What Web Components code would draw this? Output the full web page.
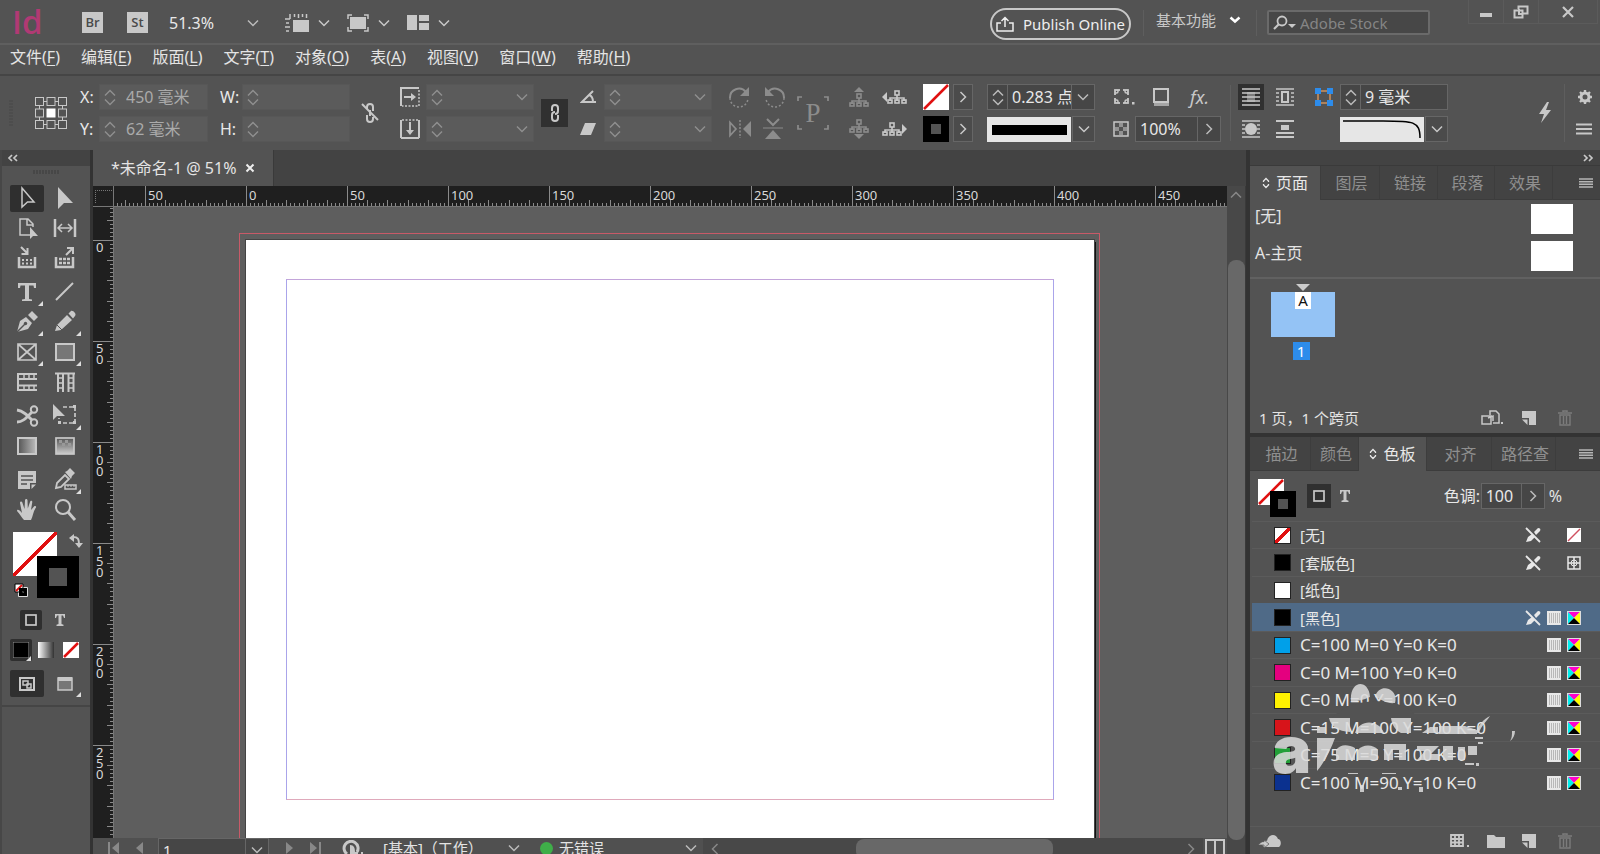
<!DOCTYPE html>
<html lang="zh-CN">
<head>
<meta charset="utf-8">
<title>未命名-1</title>
<style>
  html, body { margin: 0; height: 100%; }
  body {
    font: 16px/20px "Noto Sans", "Noto Sans CJK SC", sans-serif;
    color: #e4e4e4; background: #535353; overflow: hidden;
    --bg: #535353; --dark: #434343; --edge: #333; --field: #464646; --line: #666; --ink: #c8c8c8;
  }
</style>
</head>
<body>
<design-app></design-app>
<script>
const grid3 = (() => {
  let s = '';
  for (let r = 0; r < 3; r++) for (let c = 0; c < 3; c++)
    s += `<rect x="${1.5 + c * 11.5}" y="${1.5 + r * 11.5}" width="8" height="8" ${r === 1 && c === 1 ? 'fill="#fff" stroke="#fff"' : ''}/>`;
  return s + '<path d="M10 5.5h3M21 5.5h3M10 28.5h3M21 28.5h3M5.5 10v3M5.5 21v3M28.5 10v3M28.5 21v3"/>';
})();
const tree = '<rect x="8" y="7" width="4" height="4"/><path d="M10 11v3M3 17v-3h14v3M10 14v3"/><rect x="1" y="16" width="4" height="3"/><rect x="8" y="16" width="4" height="3"/><rect x="15" y="16" width="4" height="3"/>';
const lines = 'stroke="currentColor" stroke-width="2" fill="none"';
/* name: [width, height, markup]; shapes inherit fill from currentColor */
const ICONS = {
  chev: [12, 8, `<path d="M1 1.500l5 5 5-5" fill="none" stroke="currentColor" stroke-width="1.500"/>`],
  chevBold: [12, 8, `<path d="M1.500 1.500l4.500 4 4.500-4" fill="none" stroke="currentColor" stroke-width="2.500"/>`],
  right: [8, 12, `<path d="M1.500 1l5 5-5 5" fill="none" stroke="currentColor" stroke-width="1.500"/>`],
  left: [8, 12, `<path d="M6.500 1l-5 5 5 5" fill="none" stroke="currentColor" stroke-width="1.500"/>`],
  up: [12, 8, `<path d="M1 6.500l5-5 5 5" fill="none" stroke="currentColor" stroke-width="1.500"/>`],
  dblLeft: [12, 8, `<path d="M5 1L2 4l3 3M10 1L7 4l3 3" fill="none" stroke="currentColor" stroke-width="1.700"/>`],
  dblRight: [12, 8, `<path d="M2 1l3 3-3 3M7 1l3 3-3 3" fill="none" stroke="currentColor" stroke-width="1.700"/>`],
  diamond: [8, 12, `<path d="M1.500 5V4L4 1.500 6.500 4v1M1.500 7v1L4 10.500 6.500 8V7" fill="none" stroke="currentColor" stroke-width="1.300"/>`],
  menu: [14, 10, `<path d="M0 1h14M0 3.700h14M0 6.300h14M0 9h14" stroke="currentColor" stroke-width="1.400"/>`],
  menu3: [16, 12, `<path d="M0 1.500h16M0 6h16M0 10.500h16" stroke="currentColor" stroke-width="2"/>`],
  rulers: [24, 20, `<rect x="8" y="7" width="16" height="12"/><path d="M5 5V1M9.500 4V1M13.500 5V1M17.500 4V1M21.500 5V1M0 6h5M1 10h3M0 14h5M1 18h3M5 1v5" stroke="currentColor" stroke-width="1.500"/>`],
  screen: [22, 18, `<rect x="3" y="3" width="16" height="12"/><path d="M1 5V1h4M17 1h4v4M21 13v4h-4M5 17H1v-4" fill="none" stroke="currentColor" stroke-width="1.500"/>`],
  arrange: [22, 15, `<path d="M0 0h10v15H0zM12 0h10v6H12zM12 8h10v7H12z"/>`],
  share: [18, 16, `<path d="M5 7H1v8h16V7h-4M9 11V2M5.500 5L9 1.500 12.500 5" fill="none" stroke="currentColor" stroke-width="1.500"/>`],
  search: [24, 16, `<circle cx="9" cy="6" r="4.500" fill="none" stroke="currentColor" stroke-width="1.800"/><path d="M5.500 9.500L1 14" stroke="currentColor" stroke-width="2.200"/><path d="M15 9h8l-4 4z"/>`],
  min: [14, 12, `<rect x="1" y="7" width="12" height="4"/>`],
  restore: [16, 14, `<path d="M5.500 4V1.500h9v7H10M1.500 5.500h8v7h-8zM6 4v5h4" fill="none" stroke="currentColor" stroke-width="2"/>`],
  close: [12, 12, `<path d="M1 1l10 10M11 1L1 11" stroke="currentColor" stroke-width="2.200"/>`],
  tabClose: [10, 10, `<path d="M1.500 1.500l7 7M8.500 1.500l-7 7" stroke="currentColor" stroke-width="2"/>`],
  ref: [34, 34, `<g fill="none" stroke="currentColor" stroke-width="1">${grid3}</g>`],
  unlink: [20, 22, `<path d="M7 7V5a3 3 0 0 1 6 0v4M7 13v4a3 3 0 0 0 6 0v-2M10 8v6" ${lines}/><path d="M2 2l16 16" ${lines}/>`],
  link: [12, 20, `<path d="M3 8V5a3 3 0 0 1 6 0v3a3 3 0 0 1-3 3M9 12v3a3 3 0 0 1-6 0v-3a3 3 0 0 1 3-3" ${lines}/>`],
  scaleX: [20, 20, `<path d="M1 19V1h18" fill="none" stroke="currentColor" stroke-width="2"/><path d="M19 3v16H2" fill="none" stroke="currentColor" stroke-width="1.500" stroke-dasharray="2 1.500"/><path d="M4 9h7V6l5 4-5 4v-3H4z"/>`],
  scaleY: [20, 20, `<path d="M1 1v18M19 1v18M1 19h18" fill="none" stroke="currentColor" stroke-width="2"/><path d="M2 1h16" stroke="currentColor" stroke-width="1.500" stroke-dasharray="2 1.500"/><path d="M9 3h2v8h3l-4 5-4-5h3z"/>`],
  angle: [18, 14, `<path d="M13 1L2 12h14" fill="none" stroke="currentColor" stroke-width="2"/><path d="M9 5c3 1 4 4 4 7" fill="none" stroke="currentColor" stroke-width="2"/>`],
  shear: [16, 12, `<path d="M5 0h11l-5 12H0z"/>`],
  rotCW: [24, 22, `<path d="M2 12A9 9 0 0 1 18 6" ${lines}/><path d="M21 1v9h-9z"/><path d="M2 12a9 9 0 0 0 18 0" fill="none" stroke="currentColor" stroke-width="1.500" stroke-dasharray="2 2"/>`],
  rotCCW: [24, 22, `<path d="M22 12A9 9 0 0 0 6 6" ${lines}/><path d="M3 1v9h9z"/><path d="M22 12a9 9 0 0 1-18 0" fill="none" stroke="currentColor" stroke-width="1.500" stroke-dasharray="2 2"/>`],
  flipH: [24, 18, `<path d="M2 2.500v13L8 9z" fill="none" stroke="currentColor" stroke-width="1.700"/><path d="M23 1v16l-8-8z"/><path d="M12 0v18" stroke="currentColor" stroke-width="1.500" stroke-dasharray="2 1.500"/>`],
  flipV: [22, 22, `<path d="M5 1l6 6 6-6" fill="none" stroke="currentColor" stroke-width="2"/><path d="M1 10h20" stroke="currentColor"/><path d="M11 12l8 9H3z"/>`],
  corners: [32, 34, `<path d="M1 5V1h4M27 1h4v4M31 29v4h-4M5 33H1v-4" fill="none" stroke="currentColor" stroke-width="1.700"/>`],
  treeUp: [20, 20, `<g fill="none" stroke="currentColor" stroke-width="1.600">${tree}</g><path d="M10 0l5 5H5z"/>`],
  treeDown: [20, 20, `<g transform="translate(0 -6)" fill="none" stroke="currentColor" stroke-width="1.600">${tree}</g><path d="M10 20l5-5H5z"/>`],
  treePrev: [26, 18, `<g transform="translate(5 -4)" fill="none" stroke="currentColor" stroke-width="1.600">${tree}</g><path d="M0 9l5-5v10z"/>`],
  treeNext: [26, 18, `<g transform="translate(0 -4)" fill="none" stroke="currentColor" stroke-width="1.600">${tree}</g><path d="M25 9l-5-5v10z"/>`],
  none: [26, 26, `<path d="M0 0h26v26H0z" fill="#fff"/><path d="M1 25L25 1" stroke="#e01010" stroke-width="2.500"/>`],
  stroke: [26, 26, `<path d="M0 0h26v26H0z" fill="#000"/><path d="M8 8h10v10H8z" fill="#535353"/>`],
  opts: [22, 18, `<rect x="2" y="2" width="13" height="13" fill="none" stroke="currentColor" stroke-width="1.800"/><path d="M7 0h3v4H7zM7 13h3v4H7zM0 7h4v3H0zM13 7h4v3h-4z" fill="#535353"/><path d="M5 2v1.500A1.500 1.500 0 0 1 3.500 5H2M12 2v1.500A1.500 1.500 0 0 0 13.500 5H15M5 15v-1.500A1.500 1.500 0 0 0 3.500 12H2M12 15v-1.500a1.500 1.500 0 0 1 1.500-1.500H15" fill="none" stroke="currentColor" stroke-width="1.500"/><rect x="19" y="14" width="2.500" height="2.500"/>`],
  shadow: [20, 20, `<rect x="2" y="2" width="14" height="13" fill="#535353" stroke="currentColor" stroke-width="2"/><path d="M2 17.500h15" stroke="currentColor" stroke-width="3" opacity=".7"/>`],
  checker: [16, 16, `<rect x="1" y="1" width="14" height="14" fill="none" stroke="currentColor" stroke-width="1.500"/><path d="M6 2h4v4H6zM2 6h4v4H2zM10 6h4v4h-4zM6 10h4v4H6z" opacity=".55"/>`],
  wrap1: [20, 20, `<path d="M1 2h18M1 6h18M1 10h18M1 14h18M1 18h18" stroke="currentColor" stroke-width="1.600"/><path d="M6 5h8v10H6z" opacity=".5"/>`],
  wrap2: [20, 18, `<path d="M1 1h18M1 5h3M1 9h3M1 13h3M16 5h3M16 9h3M16 13h3M1 17h18" stroke="currentColor" stroke-width="1.600"/><rect x="7" y="4" width="6" height="10" fill="none" stroke="currentColor" stroke-width="2"/>`],
  wrap3: [20, 18, `<path d="M1 1h18M1 5h3M1 9h3M1 13h3M16 5h3M16 9h3M16 13h3M1 17h18" stroke="currentColor" stroke-width="1.600"/><circle cx="10" cy="9" r="6"/>`],
  wrap4: [20, 18, `<path d="M1 1h18M1 13h18M1 17h18" stroke="currentColor" stroke-width="1.800"/><path d="M6 5h8v5H6z"/>`],
  cornerOpt: [20, 20, `<rect x="4" y="4" width="12" height="12" fill="none" stroke="#b0825a" stroke-width="2"/><path d="M1 1h6v6H1zM13 1h6v6h-6zM1 13h6v6H1zM13 13h6v6h-6z" fill="#2d8ceb"/>`],
  bolt: [14, 22, `<path d="M9 0L1 12h5l-3 9L13 8H8l3-8z"/>`],
  gear: [14, 14, `<circle cx="7" cy="7" r="4" fill="none" stroke="currentColor" stroke-width="3"/><path d="M7 0v2M7 12v2M0 7h2M12 7h2M2 2l1.500 1.500M10.500 10.500L12 12M12 2l-1.500 1.500M3.500 10.500L2 12" stroke="currentColor" stroke-width="2.400"/>`],
  curve: [84, 25, `<path d="M0 0h84v25H0z" fill="#e6e6e6"/><path d="M3 4h40c30 0 37 0 37 17" fill="none" stroke="#000" stroke-width="1.500"/>`],
  solid: [84, 25, `<path d="M0 0h84v25H0z" fill="#e6e6e6"/><path d="M5 8h75v10H5z" fill="#000"/>`],
  tSelect: [24, 24, `<path d="M7 2v19l5.500-5H19z" fill="none" stroke="currentColor" stroke-width="1.500"/>`],
  tDirect: [24, 24, `<path d="M5 1v22l6-6h9z"/>`],
  tPage: [24, 24, `<path d="M15 19H5V3h8l5 5v3M12 3v6h6" fill="none" stroke="currentColor" stroke-width="1.500"/><path d="M15 11v12l3-3h5z"/>`],
  tGap: [24, 24, `<path d="M2 3v18M22 3v18" stroke="currentColor" stroke-width="2.500"/><path d="M5 12h14M9 8l-4 4 4 4M15 8l4 4-4 4" fill="none" stroke="currentColor" stroke-width="1.500"/>`],
  tCollect: [24, 24, `<path d="M4 11v10h16V11" fill="none" stroke="currentColor" stroke-width="2.500"/><path d="M6 1l6 6M12.500 2v6H6.500" ${lines}/><path d="M7 17.500h10M7 14h10" stroke="currentColor" stroke-width="2" stroke-dasharray="2 2"/>`],
  tPlace: [24, 24, `<path d="M3 11v10h17V11" fill="none" stroke="currentColor" stroke-width="2.500"/><path d="M13 9l6-6M14 2h6v6" ${lines}/><path d="M6 13h11M6 17h11" stroke="currentColor" stroke-width="2.500" stroke-dasharray="3 1"/>`],
  tType: [24, 24, `<path d="M3 3h18v5h-2l-.5-2.500H14V19l3 .5V21H7v-1.500l3-.5V5.500H5.500L5 8H3z"/>`],
  tLine: [24, 24, `<path d="M3 20L20 3" ${lines}/>`],
  tPen: [24, 24, `<path d="M2 22L5 11l6-4 6 6-4 6zM13 5l4-4 6 6-4 4z"/><path d="M2 22l8-8" stroke="#535353" stroke-width="1.500"/><circle cx="10.500" cy="13.500" r="1.700" fill="#535353"/>`],
  tPencil: [24, 24, `<path d="M2 21l2-6L14 5l5 5L8 20zM15.500 3.500L18 1c2-1 6 3 4 5l-2 2.500z"/><path d="M4 15l5 5" stroke="#535353"/>`],
  tFrame: [24, 24, `<path d="M3 4h18v16H3zM3 4l18 16M21 4L3 20" fill="none" stroke="currentColor" stroke-width="1.700"/>`],
  tRect: [24, 24, `<rect x="3" y="4" width="18" height="16" fill="#777" stroke="currentColor" stroke-width="2"/>`],
  tRows: [24, 24, `<path d="M3 3v18M2 4h20M2 9h20M2 15.500h20M2 20h20" ${lines}/><path d="M9 4v5M14 4v5M19 4v5M9 15v5M14 15v5M19 15v5" stroke="currentColor" stroke-width="1.500"/>`],
  tCols: [24, 24, `<path d="M2 3.500h20M5 3v19M10 3v19M15.500 3v19M20.500 3v19" ${lines}/><path d="M5 8h5M5 13h5M5 18h5M15 8h5M15 13h5M15 18h5" stroke="currentColor" stroke-width="1.500"/>`],
  tScissors: [24, 24, `<circle cx="19" cy="5.500" r="3.200" ${lines}/><circle cx="19" cy="18.500" r="3.200" ${lines}/><path d="M2 6c6 1 10 5 15 10M2 18c6 0 9-4 15-10" fill="none" stroke="currentColor" stroke-width="2.800"/>`],
  tTransform: [24, 24, `<path d="M0 0v16l4-4h8z"/><path d="M10 3h12v16H6v-5" fill="none" stroke="currentColor" stroke-width="1.700" stroke-dasharray="4 2"/><path d="M20 1h3v3h-3zM20 17h3v3h-3zM5 17h3v3H5z"/>`],
  tGrad: [24, 24, `<linearGradient id="a"><stop stop-color="#555"/><stop offset="1" stop-color="#bbb"/></linearGradient><rect x="3" y="4" width="18" height="16" fill="url(#a)" stroke="currentColor" stroke-width="2"/>`],
  tFeather: [24, 24, `<linearGradient id="b" x2="0" y2="1"><stop stop-color="#555"/><stop offset="1" stop-color="#ccc"/></linearGradient><rect x="3" y="4" width="18" height="16" fill="url(#b)" stroke="currentColor" stroke-width="1.700"/><path d="M6 6h3v3H6zM12 6h3v3h-3zM9 9h3v3H9zM15 9h3v3h-3z" fill="#999"/>`],
  tNote: [24, 24, `<path d="M3 3h18v12h-6v6H3z"/><path d="M21 16.500L16.500 21v-4.500z"/><path d="M6 8h12M6 12h12M6 16h6" stroke="#535353" stroke-width="1.500"/>`],
  tDropper: [24, 24, `<path d="M3 20l1-5 8-8 4 4-8 8z" fill="none" stroke="currentColor" stroke-width="1.800"/><path d="M12 4l2-1 3-3 5 5-3 3-1 3z"/><path d="M12 17h11v4H12z" fill="none" stroke="currentColor" stroke-width="1.500"/><path d="M15 17v2M18 17v2M21 17v2" stroke="currentColor"/>`],
  tHand: [24, 24, `<path d="M9 22c-2-2-4-6-7-9 0-2 2-2 5 2L5 5c0-2 2-2 2.500 0L9.500 11 10 2.500c0-2 2.500-2 2.500 0l.3 8L15 4c.5-2 2.500-1.500 2.300 0L16 12l3-3.500c1.500-1 2.500 0 2 1-3 4-3 9-5 12.500z"/>`],
  tZoom: [24, 24, `<circle cx="10" cy="9" r="7" ${lines}/><path d="M15 14l7 8" stroke="currentColor" stroke-width="3"/>`],
  swap: [14, 14, `<path d="M4 3c5 0 6 2 6 7" ${lines}/><path d="M0 4l5-4v8zM10 14l-4-5h8z"/>`],
  defaults: [14, 14, `<path d="M1 1h8v8H1z" fill="#fff" stroke="#000"/><path d="M2 8l6-6" stroke="#e01010" stroke-width="2"/><path d="M6.500 6.500h5v5h-5z" fill="none" stroke="#000" stroke-width="3"/><path d="M4.500 9.500v4h9v-9h-4" fill="none" stroke="#ddd"/>`],
  box: [12, 12, `<rect x="1" y="1" width="10" height="10" fill="none" stroke="currentColor" stroke-width="1.700"/>`],
  tee: [12, 12, `<path d="M1 0h10v4h-1L9 1.500H7.500V10l2 .7V12h-7v-1.300l2-.7V1.500H3L2 4H1z"/>`],
  black: [16, 16, `<path d="M0 0h16v16H0z" fill="#000" stroke="#999"/>`],
  gradient: [16, 16, `<linearGradient id="c"><stop stop-color="#fff"/><stop offset="1" stop-color="#333"/></linearGradient><rect width="16" height="16" fill="url(#c)"/>`],
  noneSm: [16, 16, `<path d="M0 0h16v16H0z" fill="#fff"/><path d="M1 15L15 1" stroke="#e01010" stroke-width="2.500"/>`],
  viewN: [16, 16, `<rect x="1" y="2" width="14" height="12" fill="none" stroke="currentColor" stroke-width="2"/><path d="M4 5h5v4H4zM8 8h4v4H8z" fill="none" stroke="currentColor" stroke-width="1.500"/>`],
  viewP: [16, 16, `<rect x="1" y="2" width="14" height="12" fill="#777" stroke="currentColor" stroke-width="1.500"/><path d="M1 1h14v4H1z"/>`],
  first: [12, 12, `<path d="M0 0h2v12H0zM11 0v12L4 6z"/>`],
  prev: [8, 12, `<path d="M7 0v12L0 6z"/>`],
  next: [8, 12, `<path d="M0 0v12l7-6z"/>`],
  last: [12, 12, `<path d="M9 0h2v12H9zM0 0v12l7-6z"/>`],
  preflight: [22, 16, `<path d="M5 14A7 7 0 1 1 15 12" fill="none" stroke="currentColor" stroke-width="3"/><path d="M8 5c4 0 5 3 5 7h3v4H8z"/><path d="M19 12h2v2h-2z"/>`],
  split: [20, 16, `<path d="M1 20V1h18v19M10 1v18" ${lines}/>`],
  pageSize: [24, 16, `<path d="M9 5V1h6l3 3v9h-6M1 6h9v8H1zM7 8l5-2v5" fill="none" stroke="currentColor" stroke-width="1.500"/><path d="M20 12h2v2h-2z"/>`],
  newPage: [14, 14, `<path d="M0 0h14v14H7V7H0z"/><path d="M0 8.500h5.500V14z"/>`],
  trash: [14, 16, `<path d="M0 3h14M5 2V1h4v1" fill="none" stroke="currentColor" stroke-width="1.500"/><path d="M2 5h10v10H2zM5.500 6v8M8.500 6v8" fill="none" stroke="currentColor" stroke-width="1.400"/>`],
  cloud: [24, 14, `<path d="M7 13c-2 0-3-2-2-3 0-3 3-4 4-3 1-7 9-8 11-2 3 0 4 6 1 8z"/><path d="M0 11c3-3 5-4 6-3V6l5 4-5 4v-3z" stroke="#535353" stroke-width=".7"/>`],
  swGrid: [20, 14, `<path d="M1 1h12v11H1zM1 5h12M1 8.500h12M5 1v11M9 1v11" fill="none" stroke="currentColor" stroke-width="1.800"/><path d="M17 11h2v2h-2z"/>`],
  folder: [18, 14, `<path d="M0 1h7l2 2h9v11H0z"/>`],
  noEdit: [16, 16, `<path d="M1 1l14 14" stroke="currentColor" stroke-width="1.800"/><path d="M1 15l2-5 4-3 3 3-4 4zM9 5l4-4c2 0 3 1 2 3l-4 4z"/>`],
  noneBox: [14, 14, `<path d="M0 0h14v14H0z" fill="#fff"/><path d="M1 13L13 1" stroke="#d05060" stroke-width="1.500"/>`],
  regist: [14, 14, `<path d="M1 1h12v12H1zM7 1v12M1 7h12" fill="none" stroke="currentColor" stroke-width="1.500"/><circle cx="7" cy="7" r="3" fill="none" stroke="currentColor"/>`],
  process: [14, 14, `<path d="M0 0h14v14H0z"/><path d="M2 3h11M2 5h11M2 7h11M2 9h11M2 11h11" stroke="#888" stroke-dasharray="1 1"/>`],
  cmyk: [14, 14, `<path d="M0 0h14v14H0z" fill="#ddd"/><path d="M1 1h12L7 7z" fill="#f0c"/><path d="M1 1v12l6-6z" fill="#0ee"/><path d="M13 1v12L7 7z" fill="#ff0"/><path d="M1 13h12L7 7z" fill="#000"/>`],
  grip: [26, 6, `<path d="M1 1v4M4 1v4M7 1v4M10 1v4M13 1v4M16 1v4M19 1v4M22 1v4M25 1v4" stroke="#3c3c3c"/>`],
  vgrip: [6, 26, `<path d="M1 1h4M1 4h4M1 7h4M1 10h4M1 13h4M1 16h4M1 19h4M1 22h4M1 25h4" stroke="#484848"/>`]
};

/* Registers an element whose shadow root is cloned from a template; html may read attributes. */
function define(tag, css, html, setup) {
  const sheet = `<style>*{box-sizing:border-box}:host{display:block;box-sizing:border-box}
    button{font:inherit;color:inherit;background:none;border:0;padding:0;margin:0;display:flex;align-items:center;justify-content:center}
    input,select{font:inherit;color:inherit;background:none;border:0;padding:0;margin:0;min-width:0;outline:0;appearance:none}
    ${css}</style>`;
  customElements.define(tag, class extends HTMLElement {
    connectedCallback() {
      if (this.shadowRoot) return;
      const t = document.createElement('template');
      t.innerHTML = sheet + (typeof html === 'function' ? html(n => this.getAttribute(n) || '', this) : html);
      this.attachShadow({ mode: 'open' }).append(t.content.cloneNode(true));
      if (setup) setup(this.shadowRoot, this);
    }
  });
}
const icon = (n, cls = '') => `<ui-icon name="${n}" class="${cls}"></ui-icon>`;

define('ui-icon', ':host{display:inline-flex;flex:none}svg{display:block;fill:currentColor}', a => {
  const [w, h, m] = ICONS[a('name')];
  return `<svg width="${w}" height="${h}" viewBox="0 0 ${w} ${h}" aria-hidden="true">${m}</svg>`;
});

define('num-field', `
  :host{display:flex;align-items:center;height:26px}
  label{flex:none;width:var(--label,0);color:#e8e8e8}
  .f{flex:1;min-width:0;height:100%;display:flex;background:var(--field);border:1px solid var(--line)}
  .spin{flex:none;width:20px;display:flex;flex-direction:column;justify-content:space-between;align-items:center;padding:4px 0;border-right:1px solid var(--line);color:#bbb}
  .spin button{height:7px}
  input{flex:1;width:0;padding-left:4px;color:#e8e8e8}
  .arrow{flex:none;width:23px;border-left:1px solid var(--line);color:#bbb}
  :host([dim]) .f{background:#5b5b5b;border-color:#575757}
  :host([dim]) .spin,:host([dim]) .arrow{border-color:transparent;color:#8f8f8f}
  :host([dim]) input{color:#aaa;padding-left:6px}`,
  a => `${a('label') ? `<label for="i">${a('label')}</label>` : ''}<div class="f">
    ${a('spin') ? `<div class="spin"><button aria-label="增加">${icon('up')}</button><button aria-label="减少">${icon('chev')}</button></div>` : ''}
    <input id="i" value="${a('value')}" aria-label="${a('label') || a('hint')}">
    ${a('arrow') ? `<button class="arrow" aria-label="选项">${icon(a('arrow'))}</button>` : ''}</div>`);

define('drop-down', `
  :host{display:grid;align-items:center}
  select,ui-icon{grid-area:1/1}
  select{width:100%}
  ui-icon{justify-self:end;pointer-events:none;color:var(--arrow,#bbb)}`,
  a => `<select aria-label="${a('hint')}"><option>${a('value')}</option></select>${icon(a('icon') || 'chev')}`);

define('title-bar', `
  :host{display:flex;align-items:center;height:45px;border-bottom:2px solid #5f5f5f;padding:2px 0 0 12px;color:var(--ink)}
  .logo{width:70px;font:600 33px/41px "Open Sans",sans-serif;color:#b03a74;height:43px}
  .badge{width:21px;height:21px;background:var(--ink);color:#4a4a4a;font:600 13px/21px "Open Sans",sans-serif;margin-right:24px}
  .zoom{width:90px;margin:0 26px 0 -3px;color:#e8e8e8}
  .menu{gap:9px;margin-right:17px}
  .menu ui-icon{color:#c8c8c8}
  .publish{height:32px;width:141px;border:2px solid var(--ink);border-radius:16px;margin-left:auto;gap:9px;font-size:15px;color:#eee;margin-top:2px}
  .sep{width:1px;height:26px;background:#5e5e5e;margin:0 10px 0 15px}
  .sep1{margin:0 12px}
  .ws{width:85px;font-size:15px;margin-top:-6px}
  .find{display:flex;align-items:center;height:25px;width:163px;border:2px solid #6a6a6a;border-radius:2px;background:#474747;padding-left:4px}
  .find input{flex:1;width:0;font-size:15px;padding-left:3px}
  .find input::placeholder{color:#858585;opacity:1}
  .win{display:flex;align-self:flex-start;height:24px;margin:-2px 2px 0 38px;border:1px solid #5b5b5b;border-top:0}
  .win button{width:35px;border-right:1px solid #5b5b5b}
  .win button:last-child{width:58px;border:0}`,
  `<div class="logo">Id</div>
   <button class="badge">Br</button><button class="badge">St</button>
   <drop-down class="zoom" value="51.3%" hint="缩放级别"></drop-down>
   <button class="menu" aria-label="视图选项">${icon('rulers')}${icon('chev')}</button>
   <button class="menu" aria-label="屏幕模式">${icon('screen')}${icon('chev')}</button>
   <button class="menu" aria-label="排列文档">${icon('arrange')}${icon('chev')}</button>
   <button class="publish">${icon('share')}Publish Online</button>
   <div class="sep sep1"></div>
   <drop-down class="ws" value="基本功能" hint="工作区" icon="chevBold" style="--arrow:#fff"></drop-down>
   <div class="sep"></div>
   <label class="find">${icon('search')}<input placeholder="Adobe Stock" aria-label="Adobe Stock"></label>
   <div class="win"><button aria-label="最小化">${icon('min')}</button><button aria-label="还原">${icon('restore')}</button><button aria-label="关闭">${icon('close')}</button></div>`);

define('menu-bar', `
  :host{display:flex;gap:21px;height:31px;padding:0 10px;border-bottom:2px solid #454545}
  button{height:24px;line-height:24px}
  u{text-underline-offset:2px}`,
  [['文件', 'F'], ['编辑', 'E'], ['版面', 'L'], ['文字', 'T'], ['对象', 'O'], ['表', 'A'], ['视图', 'V'], ['窗口', 'W'], ['帮助', 'H']]
    .map(([t, k]) => `<button>${t}(<u>${k}</u>)</button>`).join(''));

define('control-bar', `
  :host{display:flex;align-items:center;height:74px;padding:0 8px;color:var(--ink)}
  .g{flex:none;display:grid;grid-template-rows:26px 26px;row-gap:6px;align-items:center;justify-items:start}
  .g num-field,.g .wide{width:100%}
  .xy{grid-template-columns:128px;margin-left:12px}
  .wh{grid-template-columns:130px;margin-left:12px;--label:22px}
  .xy{--label:19px}
  .un{margin-left:10px}
  .sc{grid-template-columns:22px 108px;column-gap:4px;margin-left:20px}
  .lk{width:27px;height:28px;background:#303030;margin-left:7px}
  .sh{grid-template-columns:20px 108px;column-gap:4px;margin-left:12px}
  .off{color:#8c8c8c}
  .rt{grid-template-columns:24px 24px;column-gap:10px;margin-left:16px}
  .p{display:grid;place-items:center;margin-left:11px;font:27px/34px "Liberation Serif",serif}
  .p>*{grid-area:1/1}
  .tr{grid-template-columns:20px 26px;column-gap:13px;margin-left:20px}
  .sw{grid-template-columns:26px 20px;column-gap:4px;margin-left:15px}
  .more{width:20px;height:26px;border:1px solid var(--line);background:#4b4b4b}
  .st{grid-template-columns:85px 23px;margin-left:14px}
  .st num-field,.co num-field{grid-column:1/3}
  .dd{width:23px;height:26px;border:1px solid var(--line);background:#4b4b4b}
  .fx{grid-template-columns:108px;margin-left:18px}
  .fx>div{display:flex;align-items:center;width:100%;gap:6px;justify-content:space-between}
  .fx i{font:italic 18px/24px "Noto Sans",sans-serif}
  .fx num-field{width:86px}
  .sep{width:1px;height:56px;background:#5e5e5e;margin-left:9px}
  .wr{grid-template-columns:26px 26px;column-gap:8px;margin-left:7px;justify-items:center}
  .on{background:#303030;width:26px;height:26px}
  .co{grid-template-columns:26px 85px 23px;margin-left:16px}
  .co num-field{grid-column:2/4}
  .bolt{margin-left:auto;margin-right:12px}
  .end{width:28px;border-left:1px solid #5e5e5e;justify-items:end}`,
  `${icon('vgrip')}<button style="margin-left:20px" aria-label="参考点">${icon('ref')}</button>
  <div class="g xy"><num-field dim spin="1" label="X:" value="450 毫米"></num-field><num-field dim spin="1" label="Y:" value="62 毫米"></num-field></div>
  <div class="g wh"><num-field dim spin="1" label="W:"></num-field><num-field dim spin="1" label="H:"></num-field></div>
  <button class="un" aria-label="约束宽高">${icon('unlink')}</button>
  <div class="g sc">${icon('scaleX')}<num-field dim spin="1" arrow="chev" hint="X 缩放"></num-field>${icon('scaleY')}<num-field dim spin="1" arrow="chev" hint="Y 缩放"></num-field></div>
  <button class="lk" aria-label="约束缩放">${icon('link')}</button>
  <div class="g sh">${icon('angle')}<num-field dim spin="1" arrow="chev" hint="旋转角度"></num-field>${icon('shear')}<num-field dim spin="1" arrow="chev" hint="切变角度"></num-field></div>
  <div class="g rt off"><button aria-label="顺时针旋转">${icon('rotCW')}</button><button aria-label="逆时针旋转">${icon('rotCCW')}</button><button aria-label="水平翻转">${icon('flipH')}</button><button aria-label="垂直翻转">${icon('flipV')}</button></div>
  <div class="p off">${icon('corners')}<span>P</span></div>
  <div class="g tr"><button class="off" aria-label="选择容器">${icon('treeUp')}</button><button aria-label="上一对象">${icon('treePrev')}</button><button class="off" aria-label="选择内容">${icon('treeDown')}</button><button aria-label="下一对象">${icon('treeNext')}</button></div>
  <div class="g sw"><button aria-label="填色">${icon('none')}</button><button class="more" aria-label="填色选项">${icon('right')}</button><button aria-label="描边">${icon('stroke')}</button><button class="more" aria-label="描边选项">${icon('right')}</button></div>
  <div class="g st"><num-field spin="1" arrow="chev" value="0.283 点" hint="描边粗细"></num-field><button aria-label="描边类型">${icon('solid')}</button><button class="dd" aria-label="描边类型选项">${icon('chev')}</button></div>
  <div class="g fx"><div style="padding-right:12px"><button aria-label="角选项">${icon('opts')}</button><button aria-label="投影">${icon('shadow')}</button><button aria-label="效果"><i>fx.</i></button></div>
    <div>${icon('checker')}<num-field arrow="right" value="100%" hint="不透明度"></num-field></div></div>
  <div class="sep"></div>
  <div class="g wr"><button class="on" aria-label="无绕排">${icon('wrap1')}</button><button aria-label="沿定界框绕排">${icon('wrap2')}</button><button aria-label="沿形状绕排">${icon('wrap3')}</button><button aria-label="上下型绕排">${icon('wrap4')}</button></div>
  <div class="g co">${icon('cornerOpt')}<num-field spin="1" value="9 毫米" hint="角大小"></num-field><span></span><button aria-label="角形状">${icon('curve')}</button><button class="dd" aria-label="角形状选项">${icon('chev')}</button></div>
  <button class="bolt" aria-label="快速应用">${icon('bolt')}</button>
  <div class="g end"><button aria-label="自定义">${icon('gear')}</button><button aria-label="菜单">${icon('menu3')}</button></div>`);

const tool = (n, label, more, on) => `<button class="${on ? 'on' : ''} ${more ? 'more' : ''}" aria-label="${label}">${icon(n)}</button>`;
define('tool-box', `
  :host{width:93px;background:var(--bg);border-right:3px solid var(--edge);border-left:2px solid #474747;color:var(--ink)}
  .head{height:16px;background:var(--dark);padding:4px 5px}
  .head ui-icon{display:flex}
  .grip{display:flex;justify-content:center;padding:3px 0;height:17px}
  .t{display:grid;grid-template-columns:34px 34px;column-gap:4px;grid-auto-rows:30px;padding-left:8px;margin-bottom:4px;align-items:center}
  .t button{height:27px;width:34px;position:relative}
  .on{background:#2f2f2f;border-radius:2px}
  .more::after{content:"";position:absolute;right:1px;bottom:0;border-left:5px solid transparent;border-bottom:5px solid #ddd}
  .fs{position:relative;height:72px;margin:7px 0 0 11px}
  .fs>*{position:absolute}
  .fill{left:0;top:0;width:44px;height:44px;background:linear-gradient(135deg,#fff 47%,#e01010 47%,#e01010 53%,#fff 53%)}
  .line{left:24px;top:24px;width:42px;height:42px;background:#535353;border:12px solid #000}
  .swap{left:56px;top:2px}.def{left:1px;top:51px}
  .r{display:flex;align-items:center;position:relative}
  .r button{position:relative}`,
  `<div class="head">${icon('dblLeft')}</div><div class="grip">${icon('grip')}</div>
  <div class="t">${tool('tSelect', '选择', 0, 1)}${tool('tDirect', '直接选择')}${tool('tPage', '页面')}${tool('tGap', '间隙')}${tool('tCollect', '内容收集器')}${tool('tPlace', '内容置入器')}</div>
  <div class="t">${tool('tType', '文字', 1)}${tool('tLine', '直线')}${tool('tPen', '钢笔', 1)}${tool('tPencil', '铅笔', 1)}${tool('tFrame', '矩形框架', 1)}${tool('tRect', '矩形', 1)}${tool('tRows', '水平网格')}${tool('tCols', '垂直网格')}</div>
  <div class="t">${tool('tScissors', '剪刀')}${tool('tTransform', '自由变换', 1)}${tool('tGrad', '渐变色板')}${tool('tFeather', '渐变羽化')}</div>
  <div class="t">${tool('tNote', '附注')}${tool('tDropper', '颜色主题', 1)}${tool('tHand', '抓手')}${tool('tZoom', '缩放显示')}</div>
  <div class="fs"><button class="fill" aria-label="填色"></button><button class="line" aria-label="描边"></button>
    <button class="swap" aria-label="互换">${icon('swap')}</button><button class="def" aria-label="默认">${icon('defaults')}</button></div>
  <div class="r" style="padding:6px 0 0 18px;gap:12px"><button class="on" style="width:22px;height:20px" aria-label="格式针对容器">${icon('box')}</button><button aria-label="格式针对文本">${icon('tee')}</button></div>
  <div class="r" style="padding:9px 0 0 8px;gap:6px"><button class="on more" style="width:22px;height:22px" aria-label="应用颜色">${icon('black')}</button><button aria-label="应用渐变">${icon('gradient')}</button><button aria-label="应用无" style="margin-left:3px">${icon('noneSm')}</button></div>
  <div class="r" style="padding:9px 0 8px 8px;gap:4px;border-bottom:2px solid #454545"><button class="on" style="width:34px;height:27px" aria-label="正常">${icon('viewN')}</button><button class="more" style="width:34px;height:27px" aria-label="预览">${icon('viewP')}</button></div>`);

/* Rulers are 101 px per 50 mm, counted from the page's top left corner.
   Only the marks that fit the ruler's length are drawn, again on each resize. */
const STEP = 101;
function watch(root, host, draw) {
  const svg = root.querySelector('svg');
  const paint = () => { svg.innerHTML = draw(host.clientWidth, host.clientHeight); };
  new ResizeObserver(paint).observe(host);
}
const rulerCss = 'overflow:hidden;background:#1f1f1f}svg{display:block}text{fill:#d8d8d8;font:13px "Noto Sans",sans-serif}';
define('ruler-h', ':host{height:21px;min-width:0;' + rulerCss, '<svg width="100%" height="21"></svg>', (root, host) => watch(root, host, w => {
  let d = '', t = '';
  const zero = 132;
  for (let i = -2; zero + i * STEP < w; i++) {
    const x = zero + i * STEP;
    if (x >= 0) d += `M${x + .5} 0v20`;
    for (let k = 1; k < 25; k++) d += `M${x + Math.round(k * STEP / 25) + .5} 20v-${k % 5 ? 3 : 6}`;
    if (x >= 0 && x + 28 < w) t += `<text x="${x + 3}" y="14">${Math.abs(i * 50)}</text>`;
  }
  return `<path d="${d}" stroke="#8a8a8a"/><path d="M0 20.500h${w}" stroke="#777"/>${t}`;
}));
define('ruler-v', ':host{width:21px;min-height:0;' + rulerCss, '<svg width="21" height="100%"></svg>', (root, host) => watch(root, host, (w, h) => {
  let d = '', t = '';
  const zero = 33;
  for (let i = -1; zero + i * STEP < h; i++) {
    const y = zero + i * STEP;
    if (y >= 0) d += `M0 ${y + .5}h20`;
    for (let k = 1; k < 25; k++) d += `M20 ${y + Math.round(k * STEP / 25) + .5}h-${k % 5 ? 3 : 6}`;
    if (y >= 0 && y + 40 < h) [...String(i * 50)].forEach((c, n) => t += `<text x="3" y="${y + 12 + n * 11}">${c}</text>`);
  }
  return `<path d="${d}" stroke="#8a8a8a"/><path d="M20.500 0v${h}" stroke="#777"/>${t}`;
}));

define('page-canvas', `
  :host{position:relative;overflow:hidden;background:#5e5e5e}
  div{position:absolute}
  .bleed{left:125px;top:26px;width:861px;height:900px;border:1px solid #c85a68}
  .page{left:132px;top:33px;width:848px;height:600px;background:#fff;outline:1px solid #444;box-shadow:2px 2px 0 #111}
  .margin{left:40px;top:39px;width:768px;height:521px;border:1px solid #aaa4ea;border-top-color:#c3a5da;border-bottom-color:#dfa9bb}`,
  '<div class="bleed"></div><div class="page"><div class="margin"></div></div>');

define('status-bar', `
  :host{display:flex;align-items:flex-start;height:16px;overflow:hidden;background:#505050;color:#888;font-size:15px}
  :host>*{flex:none;height:20px}
  button{width:12px;height:20px}
  .num{width:111px;margin-left:12px;height:24px;color:#ddd}
  .pf{color:var(--ink);width:22px}
  .prof{color:#e4e4e4;width:137px;height:20px}
  .err{color:#e4e4e4;width:138px;height:20px}
  .dot{width:13px;height:13px;border-radius:50%;background:#3fae49;margin:4px 6px 0 20px}
  .sb{flex:1;display:flex;align-items:center;background:#484848;margin-left:6px;padding:0 8px;height:22px}
  .sb i{flex:0 0 197px;height:20px;border-radius:8px;background:#686868}
  .sp{flex:1 1 137px}.sp2{flex:1 1 134px}
  .split{width:24px;color:var(--ink);height:18px}`,
  `<button style="margin-left:15px" aria-label="首页">${icon('first')}</button><button style="margin-left:14px" aria-label="上一页">${icon('prev')}</button>
  <num-field class="num" value="1" arrow="chev" hint="页码"></num-field>
  <button style="margin-left:15px" aria-label="下一页">${icon('next')}</button><button style="margin-left:14px" aria-label="末页">${icon('last')}</button>
  <button class="pf" style="margin-left:20px" aria-label="印前检查">${icon('preflight')}</button>
  <drop-down class="prof" style="margin-left:19px" value="[基本]（工作）" hint="印前配置"></drop-down>
  <span class="dot"></span><drop-down class="err" value="无错误" hint="错误"></drop-down>
  <div class="sb">${icon('left')}<span class="sp"></span><i></i><span class="sp2"></span>${icon('right')}</div>
  <button class="split" aria-label="拆分视图">${icon('split')}</button>`);

define('doc-window', `
  :host{display:grid;min-width:0;grid-template:36px 21px 1fr 16px / 21px 1fr 19px;background:#4a4a4a}
  .tabs{grid-column:1/4;background:var(--dark);display:flex}
  .tab{display:flex;align-items:center;gap:9px;background:var(--bg);padding:0 18px;border-right:1px solid #3a3a3a;min-width:180px}
  .tab button{color:#eee}
  .corner{background:#1f1f1f;border-right:1px solid #777;border-bottom:1px solid #777;display:grid;place-items:center}
  .corner i{width:17px;height:13px;border-top:1px dotted #777;border-left:1px dotted #777}
  .vs{grid-row:2/5;grid-column:3;background:#484848;display:flex;flex-direction:column;align-items:center;padding-top:5px;color:#888;border-right:1px solid #3a3a3a}
  .vs i{flex:1;width:17px;margin:61px 0 14px;border-radius:8px;background:#686868}
  status-bar{grid-column:1/3}`,
  `<div class="tabs"><div class="tab" role="tab"><span>*未命名-1 @ 51%</span><button aria-label="关闭文档">${icon('tabClose')}</button></div></div>
  <div class="corner"><i></i></div><ruler-h></ruler-h><div class="vs">${icon('up')}<i></i></div>
  <ruler-v></ruler-v><page-canvas></page-canvas><status-bar></status-bar>`);

define('panel-tabs', `
  :host{display:flex;height:34px;background:var(--dark);border-bottom:1px solid #3c3c3c;color:#8f8f8f}
  .menu{margin-left:auto;padding-right:7px;color:#b5b5b5}
  ::slotted(panel-tab){border-right:1px solid #3d3d3d}`,
  `<slot></slot><button class="menu" aria-label="面板菜单">${icon('menu')}</button>`);
define('panel-tab', `
  :host{display:flex;height:34px}
  button{width:100%;gap:6px;padding-left:3px}
  :host([on]){background:var(--bg);color:#e8e8e8}
  :host([on]) button{padding-left:0}`,
  (a, el) => `<button role="tab">${el.hasAttribute('on') ? icon('diamond') : ''}<slot></slot></button>`);

define('pages-panel', `
  .row{display:flex;justify-content:space-between;align-items:flex-start;height:30px;margin:0 27px 7px 5px;line-height:24px}
  .row i{width:42px;height:30px;background:#fff}
  .masters{border-bottom:2px solid #616161;height:79px;padding-top:4px}
  .spread{display:flex;flex-direction:column;align-items:center;width:64px;margin:5px 0 0 21px}
  .tri{border:7px solid transparent;border-top-color:#ccc;border-bottom:0}
  .pg{width:64px;height:45px;background:#94c3f5;margin-top:1px;display:flex;justify-content:center}
  .pg b{width:16px;height:17px;background:#fff;color:#111;font:15px/17px "Noto Sans",sans-serif;text-align:center}
  .n{width:17px;height:18px;background:#2d8ceb;color:#fff;font-size:15px;line-height:18px;text-align:center;margin:5px 4px 0 0}
  .foot{display:flex;align-items:center;height:28px;margin:44px 28px 1px 9px;font-size:15px;color:#e4e4e4}
  .foot button{color:var(--ink);margin-left:17px}
  .foot button:first-of-type{margin-left:auto}
  .foot button:last-of-type{color:#7c7c7c;margin-left:22px}`,
  `<panel-tabs><panel-tab on style="width:71px">页面</panel-tab><panel-tab style="width:59px">图层</panel-tab><panel-tab style="width:58px">链接</panel-tab><panel-tab style="width:57px">段落</panel-tab><panel-tab style="width:58px">效果</panel-tab></panel-tabs>
  <div class="masters"><div class="row"><span>[无]</span><i></i></div><div class="row"><span>A-主页</span><i></i></div></div>
  <div class="spread"><i class="tri"></i><div class="pg"><b>A</b></div><div class="n">1</div></div>
  <div class="foot"><span>1 页，1 个跨页</span><button aria-label="编辑页面大小">${icon('pageSize')}</button><button aria-label="新建页面">${icon('newPage')}</button><button aria-label="删除">${icon('trash')}</button></div>`);

define('swatch-row', `
  :host{display:flex;align-items:center;height:27px;padding:0 19px 0 22px;border-top:1px solid #5b5b5b;gap:6px;color:#e8e8e8;font-size:15px}
  :host(:nth-child(even)){height:28px}
  :host([latin]){font-size:17px}
  :host([on]){background:#4f6a87;border-color:#4f6a87}
  .c{width:17px;height:17px;border:1px solid #222;background:var(--c);margin-right:3px}
  .t{flex:1}`,
  a => `<span class="c" style="--c:${a('color')}"></span><span class="t"><slot></slot></span>${a('icons').split(' ').filter(Boolean).map(n => n === 'gap' ? '<span style="width:14px"></span>' : icon(n)).join('')}`);

define('water-mark', ':host{position:absolute;left:22px;top:243px;pointer-events:none}svg{display:block}text{font:900 66px/66px Inter,sans-serif}',
  `<svg width="250" height="116" fill="#dcdcdc" aria-hidden="true">
   <path d="M56 46C66 14 138 14 146 40l-20-2H58z" fill="#535353"/>
   <g opacity=".85"><path d="M79 22C77-1 97-1 98 17c-7 3-12 4-19 5zM103 17c4-15 24-9 20 6-8 1-13-3-20-6z"/>
   <path d="M57 38h21v14c-12-1-19-5-21-14zM83 53c4-14 24-14 29 0zM119 38h20v15h-10c-6-3-9-8-10-15zM150 53l8-6h8v6zM167 46h26l12 4v4h-38zM204 53c2-8 8-14 14-17-4 6-9 10-11 17z"/>
   <path d="M240 51h3c0 4-2 8-5 10 2-3 2-6 2-10zM203 57h8v2h-8zM206 62h5v2h-5z"/>
   <text x="0" y="93">a</text><path d="M45 47h9v6h-9zM45 58h18C58 72 51 84 45 91z"/>
   <path d="M64 70c4-6 12-6 19-2v12H64zM86 70c4-6 16-6 20 0v10H86zM112 64h22v16h-7V70h-6v10h-9zM145 66h22l-8 8h8v6h-22l8-9h-8zM171 66h10v14h-10zM186 67h7v13h-7zM196 66h9v9h-9zM193 83h9v2h-9zM204 83h3v3h-3z"/>
   <path d="M76 93h10v1H76zM110 93h14v1h-14zM88 105h4v7h-4zM126 107h4v3h-4zM147 107h4v5h-4z"/></g></svg>`);

define('swatches-panel', `
  :host{display:flex;flex-direction:column;flex:1;position:relative;border-top:4px solid var(--edge)}
  .top{display:flex;align-items:center;height:50px;padding:0 38px 0 8px;color:var(--ink)}
  .fs{position:relative;width:38px;height:38px;margin-right:11px}
  .fs>*{position:absolute}
  .on{width:24px;height:24px;background:#303030;margin-right:8px}
  .tint{margin-left:auto;width:101px;--label:37px}
  .list{padding-left:2px}
  .foot{display:flex;align-items:center;gap:17px;height:28px;margin-top:auto;padding:0 28px 0 8px;color:var(--ink);border-top:1px solid #5b5b5b}
  .foot button:first-child{margin-right:auto}
  .foot button:last-child{color:#7c7c7c;margin-left:5px}`,
  `<panel-tabs><panel-tab style="width:61px">描边</panel-tab><panel-tab style="width:48px">颜色</panel-tab><panel-tab on style="width:68px">色板</panel-tab><panel-tab style="width:65px">对齐</panel-tab><panel-tab style="width:64px">路径查</panel-tab></panel-tabs>
  <div class="top"><div class="fs"><button aria-label="填色" style="left:0;top:2px">${icon('none')}</button><button style="left:12px;top:14px" aria-label="描边">${icon('stroke')}</button></div>
    <button class="on" aria-label="格式针对容器">${icon('box')}</button><button aria-label="格式针对文本">${icon('tee')}</button>
    <num-field class="tint" label="色调:" value="100" arrow="right"></num-field><span style="padding-left:4px;color:#e4e4e4">%</span></div>
  <div class="list">
    <swatch-row color="linear-gradient(135deg,#fff 42%,#e01010 42%,#e01010 58%,#fff 58%)" icons="noEdit gap noneBox">[无]</swatch-row>
    <swatch-row color="#000" icons="noEdit gap regist">[套版色]</swatch-row>
    <swatch-row color="#fff">[纸色]</swatch-row>
    <swatch-row on color="#000" icons="noEdit process cmyk">[黑色]</swatch-row>
    <swatch-row latin color="#00a0e9" icons="process cmyk">C=100 M=0 Y=0 K=0</swatch-row>
    <swatch-row latin color="#e4007f" icons="process cmyk">C=0 M=100 Y=0 K=0</swatch-row>
    <swatch-row latin color="#fff100" icons="process cmyk">C=0 M=0 Y=100 K=0</swatch-row>
    <swatch-row latin color="#d7141a" icons="process cmyk">C=15 M=100 Y=100 K=0</swatch-row>
    <swatch-row latin color="#22a038" icons="process cmyk">C=75 M=5 Y=100 K=0</swatch-row>
    <swatch-row latin color="#0b318f" icons="process cmyk">C=100 M=90 Y=10 K=0</swatch-row>
  </div><water-mark></water-mark>
  <div class="foot"><button aria-label="添加到库">${icon('cloud')}</button><button aria-label="色板视图">${icon('swGrid')}</button><button aria-label="新建颜色组">${icon('folder')}</button><button aria-label="新建色板">${icon('newPage')}</button><button aria-label="删除">${icon('trash')}</button></div>`);

define('panel-dock', `
  :host{display:flex;flex-direction:column;width:354px;border-left:4px solid var(--edge);background:var(--bg)}
  .head{height:16px;background:var(--dark);border-bottom:1px solid #3a3a3a;display:flex;justify-content:flex-end;padding:4px 6px 0;flex:none;color:var(--ink)}`,
  `<div class="head">${icon('dblRight')}</div><pages-panel></pages-panel><swatches-panel></swatches-panel>`);

define('design-app', `
  :host{display:flex;flex-direction:column;height:100vh}
  main{flex:1;min-height:0;display:grid;grid-template-columns:auto 1fr auto}
  main>*{min-height:0;overflow:hidden}`,
  `<title-bar></title-bar><menu-bar></menu-bar><control-bar></control-bar>
  <main><tool-box></tool-box><doc-window></doc-window><panel-dock></panel-dock></main>`);
</script>
</body>
</html>
